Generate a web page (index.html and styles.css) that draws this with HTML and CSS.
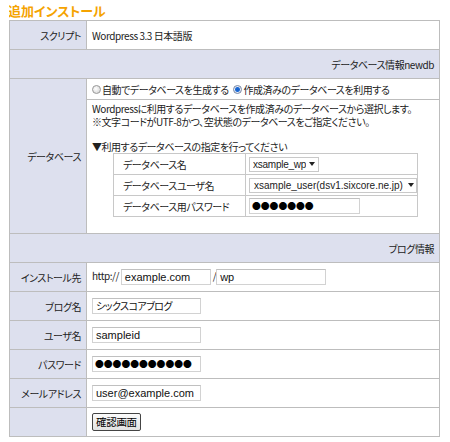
FILE: index.html
```html
<!DOCTYPE html>
<html lang="ja">
<head>
<meta charset="utf-8">
<title>追加インストール</title>
<link rel="stylesheet" href="styles.css">
</head>
<body>
<h1 class="title">追加インストール</h1>
<table class="form">
  <tr>
    <th class="label">スクリプト</th>
    <td class="val">Wordpress 3.3 日本語版</td>
  </tr>
  <tr>
    <th class="sec" colspan="2">データベース情報newdb</th>
  </tr>
  <tr>
    <th class="label" rowspan="2">データベース</th>
    <td class="val radios">
      <label class="radio"><span class="rb"></span>自動でデータベースを生成する</label>
      <label class="radio"><span class="rb on"></span>作成済みのデータベースを利用する</label>
    </td>
  </tr>
  <tr>
    <td class="val dbbox">
      <p class="desc">Wordpressに利用するデータベースを作成済みのデータベースから選択します。<br>※文字コードがUTF-8かつ、空状態のデータベースをご指定ください。</p>
      <p class="sub">▼利用するデータベースの指定を行ってください</p>
      <table class="inner">
        <tr>
          <td class="ilabel">データベース名</td>
          <td class="ival"><span class="sel sel-s"><span class="seltext">xsample_wp</span><span class="arr"></span></span></td>
        </tr>
        <tr>
          <td class="ilabel">データベースユーザ名</td>
          <td class="ival"><span class="sel sel-l"><span class="seltext">xsample_user(dsv1.sixcore.ne.jp)</span><span class="arr"></span></span></td>
        </tr>
        <tr>
          <td class="ilabel">データベース用パスワード</td>
          <td class="ival"><span class="inp inp-pw dots">●●●●●●●</span></td>
        </tr>
      </table>
    </td>
  </tr>
  <tr>
    <th class="sec" colspan="2">ブログ情報</th>
  </tr>
  <tr>
    <th class="label">インストール先</th>
    <td class="val">http:// <span class="inp inp-dom">example.com</span> /<span class="inp inp-path">wp</span></td>
  </tr>
  <tr>
    <th class="label">ブログ名</th>
    <td class="val"><span class="inp inp-m jp">シックスコアブログ</span></td>
  </tr>
  <tr>
    <th class="label">ユーザ名</th>
    <td class="val"><span class="inp inp-m">sampleid</span></td>
  </tr>
  <tr>
    <th class="label">パスワード</th>
    <td class="val"><span class="inp inp-m dots">●●●●●●●●●●●</span></td>
  </tr>
  <tr>
    <th class="label">メールアドレス</th>
    <td class="val"><span class="inp inp-m">user@example.com</span></td>
  </tr>
  <tr>
    <th class="label"></th>
    <td class="val"><button class="btn" type="button">確認画面</button></td>
  </tr>
</table>
</body>
</html>
```
FILE: styles.css
```css
html, body {
  background: #ffffff;
}
body {
  margin: 3px 10px 0 9px;
  font-family: "Noto Sans CJK JP", sans-serif;
  font-size: 10px;
  letter-spacing: -0.45px;
  font-feature-settings: "palt";
  color: #222;
}
.title {
  margin: 0 0 1px -1px;
  font-size: 13px;
  line-height: 16px;
  letter-spacing: 0;
  font-weight: bold;
  color: #f5a300;
}
.form {
  width: 431px;
  border-collapse: collapse;
  border: 1px solid #b4b4b4;
}
.form th, .form td {
  border: 1px solid #bdbdbd;
  height: 28px;
  padding: 0 5px;
  font-weight: normal;
  vertical-align: middle;
  line-height: 13px;
}
.form .label {
  width: 66px;
  background: #dde0ee;
  text-align: right;
  white-space: nowrap;
}
.form .sec {
  background: #dde0ee;
  text-align: right;
}
.form .val {
  text-align: left;
}
.form .radios {
  height: 20px;
  white-space: nowrap;
}
.radio {
  display: inline-flex;
  align-items: center;
}
.radio + .radio {
  margin-left: 3px;
}
.rb {
  display: inline-block;
  width: 9px;
  height: 9px;
  border-radius: 50%;
  border: 1px solid #9a9a9a;
  background: radial-gradient(circle at 40% 40%, #ffffff, #cfcfcf);
  margin-right: 1px;
  box-sizing: border-box;
}
.rb.on {
  background: radial-gradient(circle, #1560c8 0, #1c6ad6 2px, #e8eef8 3px, #d0d6e4 5px);
  border-color: #7a8aa6;
}
.form .dbbox {
  height: auto;
  padding: 2px 5px 16px 5px;
  vertical-align: top;
}
.desc {
  margin: 0;
  line-height: 13px;
  white-space: nowrap;
}
.sub {
  margin: 12px 0 0;
  line-height: 13px;
}
.inner {
  margin-left: 21px;
  width: 305px;
  border-collapse: collapse;
  border: 1px solid #c8c8c8;
}
.form .inner td {
  border: 1px solid #c8c8c8;
  height: 20px;
  padding: 0 0 0 9px;
  line-height: 13px;
}
.form .inner .ilabel {
  width: 125px;
}
.form .inner .ival {
  padding-left: 3px;
}
.sel {
  display: inline-flex;
  align-items: center;
  box-sizing: border-box;
  height: 15px;
  border: 1px solid #c9c9c9;
  padding: 0 2px 0 4px;
  font-family: "Liberation Sans", sans-serif;
  font-size: 10px;
  letter-spacing: 0;
  background: #fff;
  vertical-align: middle;
  white-space: nowrap;
  overflow: hidden;
}
.sel-s {
  width: 70px;
  padding-left: 3px;
  letter-spacing: -0.25px;
}
.sel-l {
  width: 168px;
}
.seltext {
  overflow: hidden;
  flex: 0 1 auto;
  min-width: 0;
}
.sel-l .seltext {
  flex: 1 1 auto;
}
.arr {
  display: inline-block;
  margin-left: 3px;
  width: 0;
  height: 0;
  border-left: 3.5px solid transparent;
  border-right: 3.5px solid transparent;
  border-top: 4px solid #222;
  flex: none;
}
.inp {
  display: inline-block;
  box-sizing: border-box;
  height: 16px;
  line-height: 14px;
  border: 1px solid #d2d2d2;
  border-top-color: #c0c0c0;
  padding: 0 3px;
  font-family: "Liberation Sans", "Noto Sans CJK JP", sans-serif;
  font-size: 11px;
  letter-spacing: 0;
  background: #fff;
  color: #111;
  vertical-align: middle;
  white-space: nowrap;
  overflow: hidden;
}
.inp.jp {
  font-family: "Noto Sans CJK JP", sans-serif;
  font-size: 10px;
  letter-spacing: -0.6px;
}
.inp-m { width: 109px; }
.inp-dom { width: 90px; }
.inp-path { width: 110px; }
.inp-pw { width: 111px; }
.inp.dots {
  font-family: "Noto Sans CJK JP", sans-serif;
  font-size: 8.8px;
  letter-spacing: 0;
  color: #000;
  line-height: 14px;
  padding-left: 2px;
}
.btn {
  font-family: "Noto Sans CJK JP", sans-serif;
  font-size: 10.5px;
  letter-spacing: -0.3px;
  height: 18px;
  padding: 0 3px;
  border: 1px solid #444;
  border-radius: 2px;
  background: linear-gradient(#fbfbfb, #e2e2e2);
  color: #000;
  line-height: 14px;
  vertical-align: middle;
}
```
